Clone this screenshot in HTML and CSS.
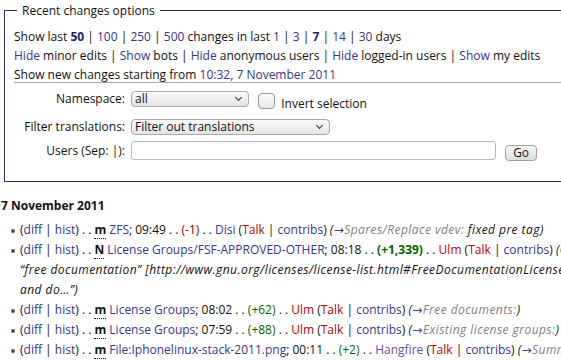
FILE: index.html
```
<!DOCTYPE html>
<html lang="en">
<head>
  <meta charset="UTF-8" />
  <title>Recent changes</title>
  <link rel="stylesheet" href="styles.css">
</head>
<body>
  <div id="content">
    <fieldset class="rc-options">
      <legend>Recent changes options</legend>
      <div class="rc-line">Show last <b class="link">50</b> | <a href="#">100</a> | <a href="#">250</a> | <a href="#">500</a> changes in last <a href="#">1</a> | <a href="#">3</a> | <b class="link">7</b> | <a href="#">14</a> | <a href="#">30</a> days</div>
      <div class="rc-line"><a href="#">Hide</a> minor edits | <a href="#">Show</a> bots | <a href="#">Hide</a> anonymous users | <a href="#">Hide</a> logged-in users | <a href="#">Show</a> my edits</div>
      <div class="rc-line">Show new changes starting from <a href="#">10:32, 7 November 2011</a></div>
      <hr>
      <table class="rc-form">
        <tr class="row-ns">
          <td class="label">Namespace:</td>
          <td>
            <span class="select narrow">all</span>
            <span class="checkbox"></span>
            <span class="check-label">Invert selection</span>
          </td>
        </tr>
        <tr class="row-tr">
          <td class="label">Filter translations:</td>
          <td><span class="select wide">Filter out translations</span></td>
        </tr>
        <tr class="row-users">
          <td class="label">Users (Sep: |):</td>
          <td>
            <span class="text-input"></span>
            <span class="go-btn">Go</span>
          </td>
        </tr>
      </table>
    </fieldset>

    <h4 class="day">7 November 2011</h4>
    <ul class="changes">
      <li>(<a href="#">diff</a> | <a href="#">hist</a>) . . <abbr>m</abbr> <a href="#">ZFS</a>; 09:49 . . <span class="neg">(-1)</span> . . <a href="#">Disi</a> (<a class="new" href="#">Talk</a> | <a href="#">contribs</a>) <span class="comment">(<span class="autocomment"><a href="#">→</a>Spares/Replace vdev:</span> fixed pre tag)</span></li>
      <li>(<a href="#">diff</a> | <a href="#">hist</a>) . . <abbr>N</abbr> <a href="#">License Groups/FSF-APPROVED-OTHER</a>; 08:18 . . <strong class="pos">(+1,339)</strong> . . <a class="new" href="#">Ulm</a> (<a class="new" href="#">Talk</a> | <a href="#">contribs</a>) <span class="comment">(Created page with<br>“free documentation” [http://www.gnu.org/licenses/license-list.html#FreeDocumentationLicenses<br>and do…”)</span></li>
      <li>(<a href="#">diff</a> | <a href="#">hist</a>) . . <abbr>m</abbr> <a href="#">License Groups</a>; 08:02 . . <span class="pos">(+62)</span> . . <a class="new" href="#">Ulm</a> (<a class="new" href="#">Talk</a> | <a href="#">contribs</a>) <span class="comment">(<span class="autocomment"><a href="#">→</a>Free documents:</span>)</span></li>
      <li>(<a href="#">diff</a> | <a href="#">hist</a>) . . <abbr>m</abbr> <a href="#">License Groups</a>; 07:59 . . <span class="pos">(+88)</span> . . <a class="new" href="#">Ulm</a> (<a class="new" href="#">Talk</a> | <a href="#">contribs</a>) <span class="comment">(<span class="autocomment"><a href="#">→</a>Existing license groups:</span>)</span></li>
      <li>(<a href="#">diff</a> | <a href="#">hist</a>) . . <abbr>m</abbr> <a href="#">File:Iphonelinux-stack-2011.png</a>; 00:11 . . <span class="pos">(+2)</span> . . <a class="visited" href="#">Hangfire</a> (<a class="new" href="#">Talk</a> | <a href="#">contribs</a>) <span class="comment">(<span class="autocomment"><a href="#">→</a>Summary</span>)</span></li>
    </ul>
  </div>
</body>
</html>
```
FILE: styles.css
```
:root {
  --link: #36368a;
  --visited: #6a4ba8;
  --redlink: #c00000;
  --frame: #2a2a72;
  --text: #111;
}

html {
  overflow: hidden;
}

body {
  margin: 0;
  font-family: "Open Sans", "DejaVu Sans", sans-serif;
  font-size: 12px;
  color: var(--text);
  background: #fff;
}

#content {
  width: 700px;
  padding: 0 0 0 1px;
}

a {
  color: var(--link);
  text-decoration: none;
}

a.new {
  color: var(--redlink);
}

a.visited {
  color: var(--visited);
}

b.link {
  color: #24245e;
}

/* Options box */
.rc-options {
  margin: 2px 0 0 3px;
  padding: 8px 10px 20px 9px;
  border: 1px solid var(--frame);
  border-right: none;
}

.rc-options legend {
  padding: 0 5px;
  margin-left: 3px;
  font-size: 12px;
}

.rc-line {
  line-height: 19px;
}

.rc-options hr {
  border: none;
  border-top: 1px solid #aaa;
  margin: -2px 0 1px;
}

.rc-form {
  border-collapse: collapse;
}

.rc-form td {
  padding: 0;
  vertical-align: middle;
}

.row-ns td {
  height: 29px;
}

.row-tr td {
  height: 27px;
}

.row-users td {
  height: 21px;
}

.rc-form td.label {
  width: 111px;
  text-align: right;
  padding-right: 6px;
}

.select {
  display: inline-block;
  position: relative;
  box-sizing: border-box;
  height: 16px;
  line-height: 14px;
  padding: 0 18px 0 3px;
  border: 1px solid #a8a8a8;
  border-radius: 4px;
  background: linear-gradient(#fafafa, #e4e4e4);
  vertical-align: middle;
}

.select::after {
  content: "";
  position: absolute;
  right: 7px;
  top: 3px;
  width: 4px;
  height: 4px;
  border-right: 1.5px solid #333;
  border-bottom: 1.5px solid #333;
  transform: rotate(45deg);
}

.select.narrow {
  width: 118px;
}

.select.wide {
  width: 199px;
}

.checkbox {
  display: inline-block;
  box-sizing: border-box;
  width: 17px;
  height: 16px;
  margin: 0 3px 0 6px;
  border: 1px solid #9a9a9a;
  border-radius: 4px;
  background: linear-gradient(#fbfbfb, #e6e6e6);
  vertical-align: middle;
  position: relative;
  top: 2px;
}

.check-label {
  position: relative;
  top: 5px;
}

.text-input {
  display: inline-block;
  box-sizing: border-box;
  width: 365px;
  height: 19px;
  border: 1px solid #b8b8b8;
  border-radius: 3px;
  background: #fff;
  vertical-align: middle;
}

.go-btn {
  display: inline-block;
  box-sizing: border-box;
  width: 32px;
  height: 16px;
  margin-left: 6px;
  line-height: 14px;
  text-align: center;
  border: 1px solid #a0a0a0;
  border-radius: 4px;
  background: linear-gradient(#fafafa, #dedede);
  vertical-align: middle;
  position: relative;
  top: 2px;
}

/* Change list */
.day {
  margin: 16px 0 6px;
  font-size: 12px;
  line-height: 16px;
  font-weight: bold;
}

.changes {
  margin: 0;
  padding: 0 0 0 19px;
  list-style: none;
}

.changes li {
  position: relative;
  line-height: 20px;
  white-space: nowrap;
}

.changes li::before {
  content: "";
  position: absolute;
  left: -9px;
  top: 9px;
  width: 4px;
  height: 4px;
  border-radius: 50%;
  background: #4a4a7a;
}

abbr {
  font-weight: bold;
  text-decoration: none;
  border-bottom: 1px dotted #111;
}

.neg {
  color: #8b0000;
}

.pos {
  color: #006400;
}

.comment {
  font-style: italic;
  letter-spacing: 0.45px;
}

.autocomment {
  color: #808080;
}

.autocomment a {
  color: #404080;
}
```
